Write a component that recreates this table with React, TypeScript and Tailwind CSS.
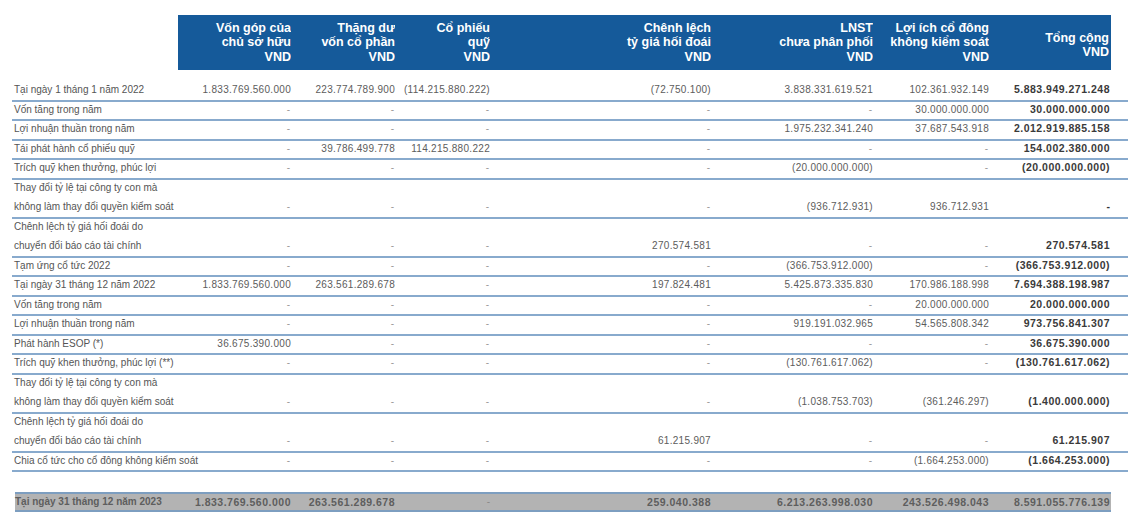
const cols = 'grid grid-cols-[166px_113px_104px_95px_221px_162px_116px_122px]'

const headers = [
  ['Vốn góp của', 'chủ sở hữu', 'VND'],
  ['Thặng dư', 'vốn cổ phần', 'VND'],
  ['Cổ phiếu', 'quỹ', 'VND'],
  ['Chênh lệch', 'tỷ giá hối đoái', 'VND'],
  ['LNST', 'chưa phân phối', 'VND'],
  ['Lợi ích cổ đông', 'không kiểm soát', 'VND'],
]

const rows: { label: string[]; v: string[] }[] = [
  { label: ['Tại ngày 1 tháng 1 năm 2022'], v: ['1.833.769.560.000', '223.774.789.900', '(114.215.880.222)', '(72.750.100)', '3.838.331.619.521', '102.361.932.149', '5.883.949.271.248'] },
  { label: ['Vốn tăng trong năm'], v: ['-', '-', '-', '-', '-', '30.000.000.000', '30.000.000.000'] },
  { label: ['Lợi nhuận thuần trong năm'], v: ['-', '-', '-', '-', '1.975.232.341.240', '37.687.543.918', '2.012.919.885.158'] },
  { label: ['Tái phát hành cổ phiếu quỹ'], v: ['-', '39.786.499.778', '114.215.880.222', '-', '-', '-', '154.002.380.000'] },
  { label: ['Trích quỹ khen thưởng, phúc lợi'], v: ['-', '-', '-', '-', '(20.000.000.000)', '-', '(20.000.000.000)'] },
  { label: ['Thay đổi tỷ lệ tại công ty con mà', 'không làm thay đổi quyền kiểm soát'], v: ['-', '-', '-', '-', '(936.712.931)', '936.712.931', '-'] },
  { label: ['Chênh lệch tỷ giá hối đoái do', 'chuyển đổi báo cáo tài chính'], v: ['-', '-', '-', '270.574.581', '-', '-', '270.574.581'] },
  { label: ['Tạm ứng cổ tức 2022'], v: ['-', '-', '-', '-', '(366.753.912.000)', '-', '(366.753.912.000)'] },
  { label: ['Tại ngày 31 tháng 12 năm 2022'], v: ['1.833.769.560.000', '263.561.289.678', '-', '197.824.481', '5.425.873.335.830', '170.986.188.998', '7.694.388.198.987'] },
  { label: ['Vốn tăng trong năm'], v: ['-', '-', '-', '-', '-', '20.000.000.000', '20.000.000.000'] },
  { label: ['Lợi nhuận thuần trong năm'], v: ['-', '-', '-', '-', '919.191.032.965', '54.565.808.342', '973.756.841.307'] },
  { label: ['Phát hành ESOP (*)'], v: ['36.675.390.000', '-', '-', '-', '-', '-', '36.675.390.000'] },
  { label: ['Trích quỹ khen thưởng, phúc lợi (**)'], v: ['-', '-', '-', '-', '(130.761.617.062)', '-', '(130.761.617.062)'] },
  { label: ['Thay đổi tỷ lệ tại công ty con mà', 'không làm thay đổi quyền kiểm soát'], v: ['-', '-', '-', '-', '(1.038.753.703)', '(361.246.297)', '(1.400.000.000)'] },
  { label: ['Chênh lệch tỷ giá hối đoái do', 'chuyển đổi báo cáo tài chính'], v: ['-', '-', '-', '61.215.907', '-', '-', '61.215.907'] },
  { label: ['Chia cổ tức cho cổ đông không kiểm soát'], v: ['-', '-', '-', '-', '-', '(1.664.253.000)', '(1.664.253.000)'] },
]

const total = ['1.833.769.560.000', '263.561.289.678', '-', '259.040.388', '6.213.263.998.030', '243.526.498.043', '8.591.055.776.139']

function Value({ text, last }: { text: string; last: boolean }) {
  if (text === '-') {
    return (
      <div className={`self-end text-right leading-[15px] pr-[1px] ${last ? 'font-bold text-[#333] text-[10.5px]' : 'text-[#9a9a9a] text-[10px]'}`}>
        -
      </div>
    )
  }
  if (last) {
    return (
      <div className="self-end text-right leading-[15px] pr-[1px] font-bold text-[10.5px] tracking-[0.5px] text-[#3a3a3a]">
        {text}
      </div>
    )
  }
  return <div className="self-end text-right leading-[15px] text-[10px] tracking-[0.3px] text-[#5c5c5c]">{text}</div>
}

export default function App() {
  return (
    <div className="w-[1128px] h-[530px] bg-white pt-[15px] font-['Liberation_Sans',Arial,sans-serif]">
      <div className={`${cols} ml-[12px]`}>
        <div />
        {headers.map((h, i) => (
          <div
            key={i}
            className="h-[55px] bg-[#155a9a] flex flex-col justify-end items-end pb-[6px] text-white font-bold text-[12.5px] leading-[14.5px] text-right"
          >
            {h.map((line, j) => (
              <span key={j}>{line}</span>
            ))}
          </div>
        ))}
        <div className="h-[55px] bg-[#155a9a] flex flex-col justify-end items-end pb-[11px] pr-[2px] text-white font-bold text-[12.5px] leading-[14px] text-right">
          <span>Tổng cộng</span>
          <span>VND</span>
        </div>
      </div>

      <div className="ml-[12px] mt-[12px]">
        {rows.map((r, i) => (
          <div key={i} className={`${cols} border-b-2 border-[#88aacd] pb-[2.5px]`}>
            <div className="flex flex-col gap-[4.5px] pl-[2px] text-[10px] leading-[15px] text-[#555] whitespace-nowrap">
              {r.label.map((l, j) => (
                <span key={j}>{l}</span>
              ))}
            </div>
            {r.v.map((v, j) => (
              <Value key={j} text={v} last={j === 6} />
            ))}
          </div>
        ))}
      </div>

      <div className="ml-[15px] mt-[20px] w-[1096px] grid grid-cols-[163px_113px_104px_95px_221px_162px_116px_122px] bg-[#b3b3b3] border-y-2 border-[#7d9ec0] h-[20px] items-center font-bold text-[#5e5e5e] leading-[16px]">
        <div className="text-[10px] whitespace-nowrap">Tại ngày 31 tháng 12 năm 2023</div>
        {total.map((t, j) => (
          <div key={j} className={`text-right text-[10.5px] ${t === '-' ? 'text-[#8a8a8a] font-normal text-[10px]' : 'tracking-[0.5px]'} ${j === 6 ? 'pr-[1px]' : ''}`}>
            {t}
          </div>
        ))}
      </div>
    </div>
  )
}
